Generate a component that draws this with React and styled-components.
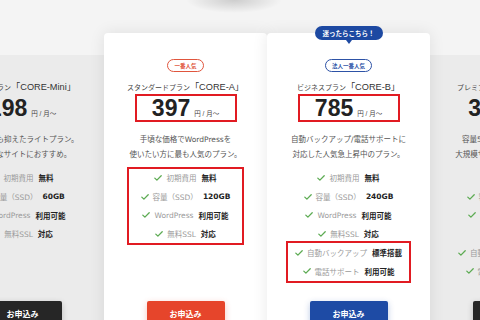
import React from "react";
import styled, { createGlobalStyle } from "styled-components";

const Global = createGlobalStyle`
  html, body { margin: 0; padding: 0; }
  body {
    background: #f4f4f4;
    overflow: hidden;
    font-family: "Liberation Sans", "Noto Sans CJK JP", sans-serif;
  }
`;

const Page = styled.div`
  width: 480px;
  height: 320px;
  overflow: hidden;
  background:
    radial-gradient(ellipse 48px 13px at 234px 0px, rgba(0,0,0,0.16), rgba(0,0,0,0) 100%),
    #f4f4f4;
`;

const Row = styled.div`
  display: grid;
  grid-template-columns: repeat(4, 163px);
  margin-left: -59px;
  padding-top: 33px;
  align-items: start;
`;

const Card = styled.div`
  position: relative;
  box-sizing: border-box;
  height: ${(p) => (p.$featured ? 310 : 288)}px;
  margin-top: ${(p) => (p.$featured ? 0 : 22)}px;
  padding: ${(p) => (p.$featured ? 26 : 4)}px 0 18px;
  background: ${(p) => (p.$featured ? "#ffffff" : "#ebebeb")};
  border-radius: ${(p) => (p.$featured ? "4px" : "0")};
  box-shadow: ${(p) => (p.$featured ? "0 0 16px rgba(0,0,0,0.09)" : "none")};
  z-index: ${(p) => (p.$featured ? 1 : 0)};
  display: flex;
  flex-direction: column;
  align-items: center;
`;

const Balloon = styled.div`
  position: absolute;
  top: -7px;
  left: 50%;
  transform: translateX(-50%);
  height: 14px;
  padding: 0 8px;
  border-radius: 7px;
  background: #1d49a2;
  color: #fff;
  font-size: 6.5px;
  font-weight: 700;
  white-space: nowrap;
  display: flex;
  align-items: center;
  &::after {
    content: "";
    position: absolute;
    left: 50%;
    bottom: -4px;
    transform: translateX(-50%);
    border-left: 3px solid transparent;
    border-right: 3px solid transparent;
    border-top: 4px solid #1d49a2;
  }
`;

const Badge = styled.div`
  box-sizing: border-box;
  height: 13px;
  padding: 0 6px;
  border: 1px solid ${(p) => p.$color};
  border-radius: 7px;
  color: ${(p) => p.$color};
  background: #fff;
  font-size: 5.5px;
  font-weight: 700;
  white-space: nowrap;
  display: flex;
  align-items: center;
  visibility: ${(p) => (p.$hidden ? "hidden" : "visible")};
`;

const Title = styled.div`
  margin-top: 9px;
  line-height: 12px;
  height: 12px;
  display: flex;
  align-items: baseline;
  white-space: nowrap;
`;

const TitlePrefix = styled.span`
  font-size: 7px;
  color: #444;
`;

const TitleName = styled.span`
  font-size: 9.2px;
  color: #333;
`;

const PriceBox = styled.div`
  box-sizing: border-box;
  margin-top: 1px;
  width: 102px;
  height: 28px;
  border: 2px solid ${(p) => (p.$marked ? "#e11b22" : "transparent")};
  display: flex;
  justify-content: center;
  align-items: baseline;
  line-height: 24px;
  white-space: nowrap;
`;

const Amount = styled.span`
  font-size: 23px;
  font-weight: 700;
  color: #222;
`;

const Unit = styled.span`
  font-size: 6.5px;
  color: #444;
  margin-left: 4px;
`;

const Desc = styled.p`
  margin: 10px 0 0;
  font-family: "DejaVu Sans", "Noto Sans CJK JP", sans-serif;
  font-size: 7.5px;
  line-height: 15px;
  color: #555;
  text-align: center;
  white-space: nowrap;
`;

const FeatureList = styled.div`
  box-sizing: border-box;
  margin-top: ${(p) => p.$mt}px;
  border: 2px solid ${(p) => (p.$marked ? "#e11b22" : "transparent")};
  padding: 0 ${(p) => p.$px || 8}px;
  display: flex;
  flex-direction: column;
  align-items: center;
`;

const FeatureRow = styled.div`
  height: 18.7px;
  display: flex;
  align-items: center;
  font-family: "DejaVu Sans", "Noto Sans CJK JP", sans-serif;
  font-size: 7.5px;
  white-space: nowrap;
`;

const Label = styled.span`
  color: #9a9a9a;
  margin-left: 4px;
`;

const Value = styled.span`
  color: #222;
  font-weight: 700;
  margin-left: 5px;
`;

const Spacer = styled.div`
  flex: 1;
`;

const Button = styled.div`
  width: 78px;
  height: 24px;
  border-radius: 2px;
  background: ${(p) => p.$bg};
  box-shadow: 0 2px 6px ${(p) => p.$shadow};
  color: #fff;
  font-size: 8px;
  font-weight: 700;
  display: flex;
  align-items: center;
  justify-content: center;
`;

const Check = () => (
  <svg width="8" height="6" viewBox="0 0 8 6" aria-hidden="true">
    <path d="M0.8 3.1 L2.9 5.1 L7.2 0.8" fill="none" stroke="#5dab53" strokeWidth="1.3" strokeLinecap="round" strokeLinejoin="round" />
  </svg>
);

const Feature = ({ label, value }) => (
  <FeatureRow>
    <Check />
    <Label>{label}</Label>
    <Value>{value}</Value>
  </FeatureRow>
);

const plans = [
  {
    key: "mini",
    featured: false,
    prefix: "ライトプラン",
    name: "「CORE-Mini」",
    price: "198",
    desc: ["費用を最も抑えたライトプラン。", "小規模なサイトにおすすめ。"],
    features: [
      ["初期費用", "無料"],
      ["容量（SSD）", "60GB"],
      ["WordPress", "利用可能"],
      ["無料SSL", "対応"],
    ],
    extra: [],
    button: { bg: "#262626", shadow: "rgba(0,0,0,0.2)" },
  },
  {
    key: "a",
    featured: true,
    badge: { text: "一番人気", color: "#e0553d" },
    prefix: "スタンダードプラン",
    name: "「CORE-A」",
    price: "397",
    markPrice: true,
    desc: ["手頃な価格でWordPressを", "使いたい方に最も人気のプラン。"],
    features: [
      ["初期費用", "無料"],
      ["容量（SSD）", "120GB"],
      ["WordPress", "利用可能"],
      ["無料SSL", "対応"],
    ],
    markFeatures: true,
    extra: [],
    button: { bg: "#e6452b", shadow: "rgba(230,69,43,0.3)" },
  },
  {
    key: "b",
    featured: true,
    balloon: "迷ったらこちら！",
    badge: { text: "法人一番人気", color: "#2d52a6" },
    prefix: "ビジネスプラン",
    name: "「CORE-B」",
    price: "785",
    markPrice: true,
    desc: ["自動バックアップ/電話サポートに", "対応した人気急上昇中のプラン。"],
    features: [
      ["初期費用", "無料"],
      ["容量（SSD）", "240GB"],
      ["WordPress", "利用可能"],
      ["無料SSL", "対応"],
    ],
    extra: [
      ["自動バックアップ", "標準搭載"],
      ["電話サポート", "利用可能"],
    ],
    markExtra: true,
    button: { bg: "#1e4ba5", shadow: "rgba(30,75,165,0.3)" },
  },
  {
    key: "x",
    featured: false,
    prefix: "プレミアムプラン",
    name: "「CORE-X」",
    price: "3,168",
    desc: ["容量500GBのハイスペック。", "大規模サイトの運営におすすめ。"],
    features: [
      ["初期費用", "無料"],
      ["容量（SSD）", "500GB"],
      ["WordPress", "利用可能"],
      ["無料SSL", "対応"],
    ],
    extra: [
      ["自動バックアップ", "標準搭載"],
      ["電話サポート", "利用可能"],
    ],
    button: { bg: "#262626", shadow: "rgba(0,0,0,0.2)" },
  },
];

export default function App() {
  return (
    <>
      <Global />
      <Page>
        <Row>
          {plans.map((p) => (
            <Card key={p.key} $featured={p.featured}>
              {p.balloon && <Balloon>{p.balloon}</Balloon>}
              <Badge $color={p.badge ? p.badge.color : "#ccc"} $hidden={!p.badge}>
                {p.badge ? p.badge.text : "　"}
              </Badge>
              <Title>
                <TitlePrefix>{p.prefix}</TitlePrefix>
                <TitleName>{p.name}</TitleName>
              </Title>
              <PriceBox $marked={p.markPrice}>
                <Amount>{p.price}</Amount>
                <Unit>円 / 月〜</Unit>
              </PriceBox>
              <Desc>
                {p.desc[0]}
                <br />
                {p.desc[1]}
              </Desc>
              <FeatureList $mt={4.5} $marked={p.markFeatures} $px={p.markFeatures ? 12 : 8}>
                {p.features.map(([l, v]) => (
                  <Feature key={l} label={l} value={v} />
                ))}
              </FeatureList>
              {p.extra.length > 0 && (
                <FeatureList $mt={-4} $marked={p.markExtra} $px={7}>
                  {p.extra.map(([l, v]) => (
                    <Feature key={l} label={l} value={v} />
                  ))}
                </FeatureList>
              )}
              <Spacer />
              <Button $bg={p.button.bg} $shadow={p.button.shadow}>
                お申込み
              </Button>
            </Card>
          ))}
        </Row>
      </Page>
    </>
  );
}
